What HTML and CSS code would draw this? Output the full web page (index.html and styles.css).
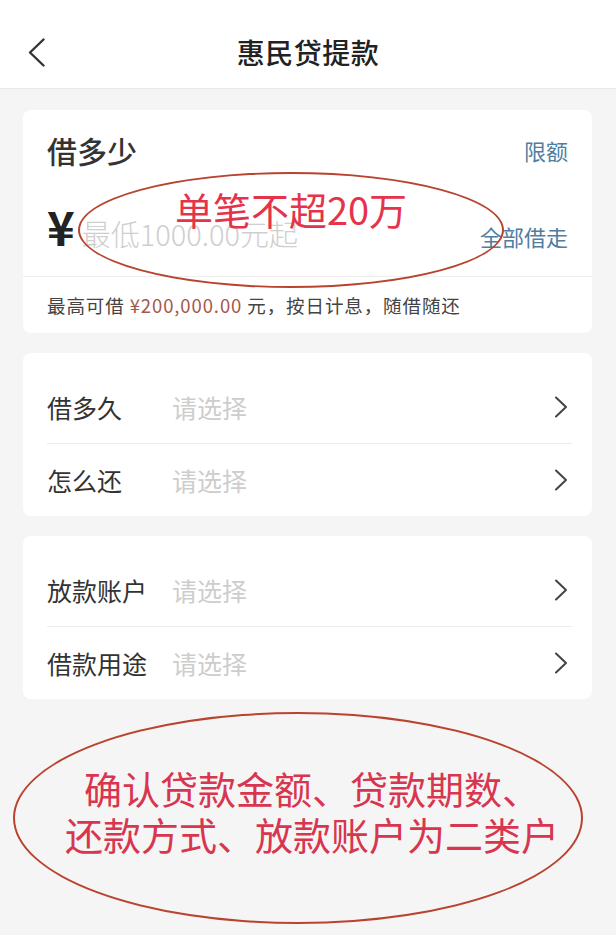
FILE: index.html
```html
<!DOCTYPE html>
<html lang="zh-CN">
<head>
    <meta charset="UTF-8">
    <meta name="viewport" content="width=device-width, initial-scale=1.0">
    <title>惠民贷提款</title>
    <link rel="stylesheet" href="styles.css">
</head>

<body>
    <!-- 顶部导航 -->
    <div class="header">
        <div class="status-bar"></div>
        <div class="nav">
            <a class="back" href="#">
                <svg width="17" height="29" viewBox="0 0 17 29">
                    <polyline points="15.5,1.5 2,14.5 15.5,27.5" fill="none" stroke="#333" stroke-width="2.4" stroke-linecap="round" stroke-linejoin="round"/>
                </svg>
            </a>
            <h1>惠民贷提款</h1>
            <span></span>
        </div>
    </div>

    <div class="content">
        <!-- 借多少 -->
        <div class="card amount-card">
            <div class="amount-top">
                <div class="amount-head">
                    <span class="amount-title">借多少</span>
                    <a class="link" href="#">限额</a>
                </div>
                <div class="amount-row">
                    <span class="yen">¥</span>
                    <span class="amount-input">最低1000.00元起</span>
                    <a class="link" href="#">全部借走</a>
                </div>
            </div>
            <div class="amount-tip">最高可借 <span class="max">¥200,000.00</span> 元，按日计息，随借随还</div>

            <!-- 标注 -->
            <div class="mark mark-small">单笔不超20万</div>
        </div>

        <!-- 借多久 / 怎么还 -->
        <div class="card list-card">
            <div class="row">
                <span class="label">借多久</span>
                <span class="value">请选择</span>
                <svg class="arrow" width="14" height="22" viewBox="0 0 14 22">
                    <polyline points="2,1.5 12,11 2,20.5" fill="none" stroke="#444" stroke-width="2" stroke-linecap="round" stroke-linejoin="round"/>
                </svg>
            </div>
            <div class="row">
                <span class="label">怎么还</span>
                <span class="value">请选择</span>
                <svg class="arrow" width="14" height="22" viewBox="0 0 14 22">
                    <polyline points="2,1.5 12,11 2,20.5" fill="none" stroke="#444" stroke-width="2" stroke-linecap="round" stroke-linejoin="round"/>
                </svg>
            </div>
        </div>

        <!-- 放款账户 / 借款用途 -->
        <div class="card list-card">
            <div class="row">
                <span class="label">放款账户</span>
                <span class="value">请选择</span>
                <svg class="arrow" width="14" height="22" viewBox="0 0 14 22">
                    <polyline points="2,1.5 12,11 2,20.5" fill="none" stroke="#444" stroke-width="2" stroke-linecap="round" stroke-linejoin="round"/>
                </svg>
            </div>
            <div class="row">
                <span class="label">借款用途</span>
                <span class="value">请选择</span>
                <svg class="arrow" width="14" height="22" viewBox="0 0 14 22">
                    <polyline points="2,1.5 12,11 2,20.5" fill="none" stroke="#444" stroke-width="2" stroke-linecap="round" stroke-linejoin="round"/>
                </svg>
            </div>
        </div>

        <!-- 底部标注 -->
        <div class="mark-big">
            <p class="mark-line">确认贷款金额、贷款期数、</p>
            <p class="mark-line">还款方式、放款账户为二类户</p>
        </div>
    </div>
</body>
</html>
```

FILE: styles.css
```css
/* 基础 */
body {
    margin: 0;
    padding: 0;
    font-family: "Noto Sans CJK SC", "Noto Sans", sans-serif;
    background-color: #f5f5f5;
    color: #333;
}

a {
    text-decoration: none;
}

/* 顶部导航 */
.header {
    background-color: #fff;
    border-bottom: 1px solid #e8e8e8;
}

.status-bar {
    height: 16px;
}

.nav {
    height: 72px;
    display: grid;
    grid-template-columns: 1fr auto 1fr;
    align-items: center;
}

.back {
    display: flex;
    padding-left: 28px;
}

.nav h1 {
    margin: 0;
    font-size: 28px;
    font-weight: 500;
    color: #222;
    letter-spacing: 0.5px;
}

/* 内容 */
.content {
    padding: 21px 24px 0 23px;
}

.card {
    background-color: #fff;
    border-radius: 8px;
    margin-bottom: 20px;
}

/* 借多少 */
.amount-card {
    position: relative;
}

.amount-top {
    padding: 20px 24px 0 24px;
    height: 146px;
    border-bottom: 1px solid #efefef;
}

.amount-head {
    display: flex;
    justify-content: space-between;
    align-items: center;
    height: 40px;
}

.amount-title {
    font-size: 30px;
    font-weight: 500;
    color: #333;
}

.link {
    font-size: 22px;
    color: #4f7ea2;
}

.amount-row {
    display: flex;
    align-items: baseline;
    margin-top: 28px;
}

.yen {
    font-size: 47px;
    font-weight: 700;
    color: #222;
    line-height: 56px;
    margin-right: 7px;
}

.amount-input {
    flex: 1;
    font-size: 29px;
    font-weight: 300;
    color: #cfcfcf;
}

.amount-tip {
    height: 56px;
    line-height: 56px;
    padding-left: 24px;
    font-size: 18.5px;
    color: #444;
    letter-spacing: 0.9px;
}

.amount-tip .max {
    color: #a5584a;
}

/* 列表 */
.list-card {
    padding-top: 18px;
}

.row {
    display: flex;
    align-items: center;
    height: 72px;
    margin: 0 20px 0 24px;
}

.row + .row {
    border-top: 1px solid #ececec;
}

.label {
    width: 125px;
    font-size: 25px;
    color: #333;
}

.value {
    flex: 1;
    font-size: 25px;
    color: #cdcdcd;
}

.arrow {
    margin-right: 4px;
}

/* 红色标注 */
.mark {
    position: absolute;
    border: 2px solid #b8442f;
    border-radius: 50%;
    color: #e5334b;
    text-align: center;
    box-sizing: border-box;
}

.mark-small {
    left: 55px;
    top: 62px;
    width: 426px;
    height: 116px;
    padding-top: 16px;
    font-size: 38px;
    line-height: 38px;
}

.mark-big {
    margin: -7px 9px 0 -10px;
    height: 212px;
    border: 2px solid #b8442f;
    border-radius: 50%;
    display: flex;
    flex-direction: column;
    align-items: center;
    justify-content: center;
    padding: 0 0 14px 28px;
    box-sizing: border-box;
}

.mark-line {
    margin: 0;
    height: 46px;
    font-size: 38px;
    line-height: 46px;
    color: #d8354f;
    text-align: center;
}
```
